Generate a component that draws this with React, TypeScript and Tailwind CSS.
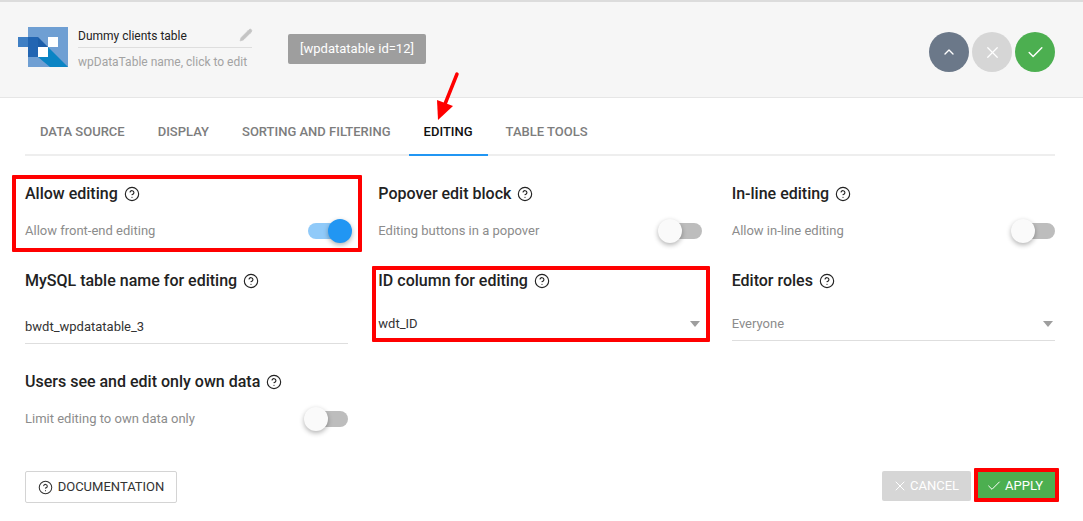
import React from "react";
import { Check, ChevronUp, CircleHelp, Pencil, X } from "lucide-react";

const Help = () => <CircleHelp size={16} strokeWidth={1.7} className="text-[#222] ml-[6px] shrink-0" />;

const Label = ({ children }: { children: React.ReactNode }) => (
  <div className="flex items-center h-5 text-[16px] leading-5 font-medium text-[#222]">
    {children}
    <Help />
  </div>
);

const Toggle = ({ on = false }: { on?: boolean }) => (
  <div className="relative w-[44px] h-4 shrink-0">
    <div className={`w-[40px] h-4 ml-[4px] rounded-full ${on ? "bg-[#90caf9]" : "bg-[#bdbdbd]"}`} />
    <div
      className={`absolute top-[-4px] w-6 h-6 rounded-full shadow-[0_2px_5px_rgba(0,0,0,0.3)] ${
        on ? "bg-[#2196f3] right-[-4px]" : "bg-[#fafafa] left-0"
      }`}
    />
  </div>
);

const ToggleField = ({ label, desc, on }: { label: string; desc: string; on?: boolean }) => (
  <div>
    <Label>{label}</Label>
    <div className="flex items-center justify-between mt-[17px] h-5">
      <span className="text-[13px] leading-5 text-[#8c8c8c]">{desc}</span>
      <Toggle on={on} />
    </div>
  </div>
);

const Caret = () => (
  <svg width="10" height="6" viewBox="0 0 10 6" className="shrink-0 mr-[2px]">
    <path d="M0 0h10L5 6z" fill="#9e9e9e" />
  </svg>
);

const tabs = ["DATA SOURCE", "DISPLAY", "SORTING AND FILTERING", "EDITING", "TABLE TOOLS"];

const Logo = () => (
  <svg width="51" height="41" viewBox="0 0 51 41" className="shrink-0">
    <rect x="10" y="0" width="40" height="40" fill="#6f9fd3" />
    <rect x="0" y="10" width="20" height="10" fill="#3f7fc4" />
    <rect x="10" y="10" width="10" height="20" fill="#2265b2" />
    <polygon points="20,10 30,20 20,20" fill="#1c5ea9" />
    <polygon points="30,20 50,40 32,40 20,30 30,30" fill="#0b84c4" />
    <rect x="30" y="10" width="10" height="10" fill="#ffffff" />
    <rect x="20" y="20" width="10" height="10" fill="#ffffff" />
  </svg>
);

const RedBox = ({ className }: { className: string }) => (
  <div className={`absolute border-[4px] border-[#ff0000] rounded-[1px] pointer-events-none ${className}`} />
);

export default function App() {
  return (
    <div className="relative w-[1083px] h-[521px] overflow-hidden bg-white font-['Roboto',sans-serif]">
      <header className="h-[98px] bg-[#f6f6f6] border-t-2 border-t-[#dcdcdc] border-b border-b-[#e6e6e6] flex items-start pl-[18px] pr-[28px]">
        <div className="mt-[25px]">
          <Logo />
        </div>
        <div className="ml-[9px] mt-[22px] w-[174px]">
          <div className="flex items-center justify-between h-[24px] border-b border-[#dedede]">
            <span className="text-[12px] leading-[24px] text-[#222]">Dummy clients table</span>
            <Pencil size={14} className="text-[#c4c4c4] fill-[#c4c4c4] mr-[-1px] mt-[-2px]" strokeWidth={1.2} />
          </div>
          <div className="text-[12px] leading-[14px] mt-[7px] text-[#a3a3a3]">wpDataTable name, click to edit</div>
        </div>
        <div className="ml-[36px] mt-[32px] w-[138px] h-[30px] rounded-[2px] bg-[#9e9e9e] text-white text-[13px] leading-[30px] text-center">
          [wpdatatable id=12]
        </div>
        <div className="ml-auto mt-[30px] flex gap-[3px]">
          <div className="w-10 h-10 rounded-full bg-[#6b7889] flex items-center justify-center text-white">
            <ChevronUp size={16} strokeWidth={2} />
          </div>
          <div className="w-10 h-10 rounded-full bg-[#d6d6d6] flex items-center justify-center text-white">
            <X size={19} strokeWidth={1.6} />
          </div>
          <div className="w-10 h-10 rounded-full bg-[#4caf50] flex items-center justify-center text-white">
            <Check size={19} strokeWidth={1.8} />
          </div>
        </div>
      </header>

      <nav className="ml-[25px] w-[1030px] h-[58px] border-b-2 border-[#eeeeee] flex pl-[15px] gap-[33px] text-[13px] font-medium">
        {tabs.map((t) => (
          <div
            key={t}
            className={`relative h-[58px] leading-[67px] ${t === "EDITING" ? "text-[#111]" : "text-[#7d7d7d]"}`}
          >
            {t}
            {t === "EDITING" && <div className="absolute left-[-15px] right-[-15px] bottom-0 h-[2px] bg-[#2196f3]" />}
          </div>
        ))}
      </nav>

      <main className="ml-[25px] w-[1030px] mt-[28px] grid grid-cols-3 gap-x-[30px] grid-rows-[87px_101px_auto]">
        <ToggleField label="Allow editing" desc="Allow front-end editing" on />
        <ToggleField label="Popover edit block" desc="Editing buttons in a popover" />
        <ToggleField label="In-line editing" desc="Allow in-line editing" />

        <div>
          <Label>MySQL table name for editing</Label>
          <div className="mt-[17px] h-[36px] border-b border-[#dedede] text-[13px] leading-[38px] text-[#333]">
            bwdt_wpdatatable_3
          </div>
        </div>
        <div>
          <Label>ID column for editing</Label>
          <div className="mt-[17px] h-[32px] flex items-center justify-between text-[13px] leading-5 text-[#333]">
            <span>wdt_ID</span>
            <Caret />
          </div>
        </div>
        <div>
          <Label>Editor roles</Label>
          <div className="mt-[17px] h-[33px] border-b border-[#dedede] flex items-center justify-between text-[13px] leading-5 text-[#8c8c8c]">
            <span>Everyone</span>
            <Caret />
          </div>
        </div>

        <ToggleField label="Users see and edit only own data" desc="Limit editing to own data only" />
      </main>

      <footer className="absolute left-[25px] right-[28px] top-[471px] flex items-start">
        <button className="h-8 w-[152px] border border-[#d4d4d4] rounded-[2px] flex items-center justify-center gap-[5px] text-[13px] text-[#333] bg-white">
          <CircleHelp size={15} strokeWidth={1.7} />
          DOCUMENTATION
        </button>
        <button className="ml-auto h-[30px] w-[89px] rounded-[2px] bg-[#d6d6d6] text-white text-[13px] flex items-center pl-[10px] gap-[2px]">
          <X size={16} strokeWidth={1.5} />
          CANCEL
        </button>
        <button className="ml-[7px] h-[30px] w-[77px] bg-[#4caf50] text-white text-[13px] flex items-center pl-[8px] gap-[3px]">
          <Check size={16} strokeWidth={1.5} />
          APPLY
        </button>
      </footer>

      <RedBox className="left-[12px] top-[175px] w-[350px] h-[77px]" />
      <RedBox className="left-[372px] top-[266px] w-[338px] h-[76px]" />
      <RedBox className="left-[974px] top-[468px] w-[85px] h-[34px]" />

      <svg className="absolute left-[432px] top-[70px]" width="30" height="52" viewBox="0 0 30 52">
        <path d="M25 4 L13 34" stroke="#ff0000" strokeWidth="3.5" strokeLinecap="round" fill="none" />
        <polygon points="5,30 21,36 6,50" fill="#ff0000" />
      </svg>
    </div>
  );
}
